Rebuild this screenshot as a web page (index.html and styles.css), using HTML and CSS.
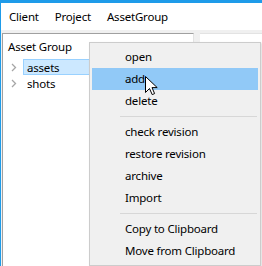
FILE: index.html
```html
<!DOCTYPE html>
<html>
<head>
<meta charset="utf-8">
<link rel="stylesheet" href="styles.css">
</head>
<body>
<div class="window">
  <div class="menubar">
    <span class="mb-item">Client</span>
    <span class="mb-item">Project</span>
    <span class="mb-item">AssetGroup</span>
  </div>
  <div class="content">
    <div class="left-panel">
      <div class="panel-title">Asset Group</div>
      <div class="tree">
        <div class="tree-row">
          <svg class="chev" width="6" height="9" viewBox="0 0 6 9"><polyline points="1,1 4.5,4.5 1,8" fill="none" stroke="#a6a6a6" stroke-width="1.3"/></svg>
          <span class="node selected">assets</span>
        </div>
        <div class="tree-row">
          <svg class="chev" width="6" height="9" viewBox="0 0 6 9"><polyline points="1,1 4.5,4.5 1,8" fill="none" stroke="#a6a6a6" stroke-width="1.3"/></svg>
          <span class="node">shots</span>
        </div>
      </div>
    </div>
    <div class="right-panel"></div>
  </div>
</div>
<div class="ctx-menu">
  <div class="ctx-item">open</div>
  <div class="ctx-item active">add</div>
  <div class="ctx-item">delete</div>
  <div class="ctx-sep"></div>
  <div class="ctx-item">check revision</div>
  <div class="ctx-item">restore revision</div>
  <div class="ctx-item">archive</div>
  <div class="ctx-item">Import</div>
  <div class="ctx-sep"></div>
  <div class="ctx-item">Copy to Clipboard</div>
  <div class="ctx-item">Move from Clipboard</div>
</div>
<svg class="cursor" width="13" height="20" viewBox="0 0 13 20"><path d="M0.5,0.5 L0.5,16.5 L4.5,12.5 L7.2,18.6 L9.6,17.6 L7,11.6 L12.2,11.6 Z" fill="#ffffff" stroke="#000000" stroke-width="1" stroke-linejoin="miter"/></svg>
</body>
</html>
```

FILE: styles.css
```css
html, body {
  margin: 0;
  padding: 0;
}
body {
  width: 262px;
  height: 266px;
  overflow: hidden;
  background: #f0f0f0;
  font-family: "Noto Sans", "Liberation Sans", sans-serif;
  font-size: 11.5px;
  letter-spacing: -0.2px;
  color: #000;
  position: relative;
}
.window {
  height: 263px;
  border-top: 3px solid #1e9be9;
  border-left: 1px solid #1e9be9;
  display: flex;
  flex-direction: column;
}
.menubar {
  height: 27px;
  background: #ffffff;
  display: flex;
  align-items: center;
  padding-left: 8px;
  gap: 16px;
}
.mb-item {
  line-height: 16px;
}
.content {
  flex: 1;
  display: flex;
  padding-top: 3px;
  gap: 6px;
}
.left-panel {
  margin-left: 1px;
  width: 190px;
  background: #ffffff;
  border-top: 1px solid #a0a0a0;
  border-left: 1px solid #a0a0a0;
  border-right: 1px solid #e3e3e3;
}
.panel-title {
  padding: 4px 0 0 5px;
  line-height: 16px;
  height: 20px;
  box-sizing: border-box;
  margin-top: 1px;
}
.tree {
  padding-top: 4px;
}
.tree-row {
  display: flex;
  align-items: center;
  height: 16px;
}
.chev {
  margin-left: 8px;
  margin-right: 6px;
}
.node {
  height: 16px;
  line-height: 15px;
  padding-left: 3px;
  box-sizing: border-box;
  border: 1px solid transparent;
}
.node.selected {
  width: 67px;
  background: #cce8ff;
  border-color: #99d1ff;
}
.right-panel {
  flex: 1;
  background: #ffffff;
  border-top: 1px solid #e3e3e3;
}
.ctx-menu {
  position: absolute;
  left: 89px;
  top: 42px;
  width: 166px;
  height: 217px;
  background: #f0f0f0;
  border: 1px solid #cccccc;
  padding: 3px 2px 2px 2px;
  box-shadow: 1px 1px 2px rgba(0,0,0,0.15);
}
.ctx-item {
  height: 22px;
  line-height: 22px;
  padding-left: 33px;
}
.ctx-item.active {
  background: #91c9f7;
}
.ctx-sep {
  height: 1px;
  background: #d7d7d7;
  margin: 4px 1px 4px 28px;
}
.cursor {
  position: absolute;
  left: 145px;
  top: 76px;
}
```
